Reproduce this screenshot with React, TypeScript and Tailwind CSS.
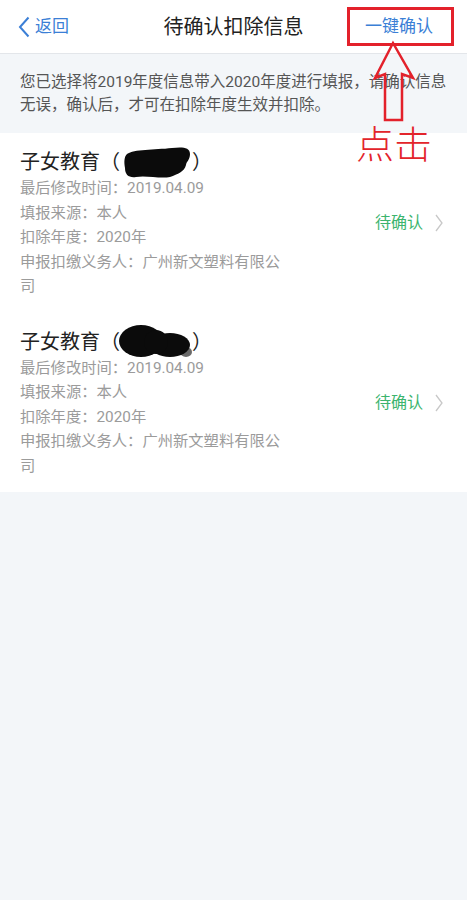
import React from "react";

const font = { fontFamily: 'Roboto, "Noto Sans CJK SC", sans-serif' };

type Deduction = {
  id: number;
  time: string;
  source: string;
  year: string;
  payer: string;
};

const items: Deduction[] = [
  { id: 1, time: "2019.04.09", source: "本人", year: "2020年", payer: "广州新文塑料有限公司" },
  { id: 2, time: "2019.04.09", source: "本人", year: "2020年", payer: "广州新文塑料有限公司" },
];

const BlobOne = () => (
  <svg className="absolute left-0 top-0 overflow-visible" width="72" height="28" viewBox="0 0 72 28">
    <path
      d="M7 6 C 14 1, 34 2, 52 0 C 62 -1, 70 -1, 70 6 C 70 12, 66 14, 66 17 C 64 24, 58 26, 50 29 C 40 31, 26 27, 16 29 C 9 30, 5 27, 5 20 C 4 14, 4 9, 7 6 Z"
      fill="#0b0b0b"
    />
  </svg>
);

const BlobTwo = () => (
  <svg className="absolute left-0 top-0 overflow-visible" width="72" height="28" viewBox="0 0 72 28">
    <ellipse cx="66" cy="24" rx="6" ry="5" fill="#6a6a6a" />
    <ellipse cx="21" cy="13" rx="22" ry="16" fill="#0b0b0b" />
    <ellipse cx="50" cy="17" rx="20" ry="12" fill="#0b0b0b" />
    <ellipse cx="36" cy="14" rx="12" ry="12" fill="#0b0b0b" />
  </svg>
);

const Card = ({ item }: { item: Deduction }) => {
  return (
    <div className="flex items-center pl-5 pr-[24px] pt-[15px] pb-[14px]">
      <div className="w-[268px]">
        <div className="text-[20px] leading-[28px] text-[#222]">
          子女教育（
          <span className="relative inline-block h-[28px] w-[72px] align-top">
            {item.id === 1 ? <BlobOne /> : <BlobTwo />}
          </span>
          ）
        </div>
        <div className="text-[15.3px] leading-[24.5px] text-[#9b9b9b]">
          <p>最后修改时间：{item.time}</p>
          <p>填报来源：{item.source}</p>
          <p>扣除年度：{item.year}</p>
          <p>申报扣缴义务人：{item.payer}</p>
        </div>
      </div>
      <div className="ml-auto flex items-center gap-[12px]">
        <span className="text-[16px] text-[#3cb46e]">待确认</span>
        <svg width="8" height="18" viewBox="0 0 8 18">
          <polyline points="1,1 7,9 1,17" fill="none" stroke="#c8c8c8" strokeWidth="1.3" />
        </svg>
      </div>
    </div>
  );
};

export default function App() {
  return (
    <div className="relative min-h-[900px] w-[467px] bg-[#f3f6f9]" style={font}>
      {/* header */}
      <div className="grid h-[54px] grid-cols-[1fr_auto_1fr] items-center border-b border-[#e3e6ea] bg-white">
        <div className="flex items-center pl-[18px] text-[#3b7fd6]">
          <svg width="12" height="22" viewBox="0 0 12 22">
            <polyline points="10.5,1.5 2,11 10.5,20.5" fill="none" stroke="#3b7fd6" strokeWidth="2" />
          </svg>
          <span className="ml-[5px] text-[17px]">返回</span>
        </div>
        <div className="text-[20px] text-[#222]">待确认扣除信息</div>
        <div className="pr-[34px] text-right text-[17px] text-[#3b7fd6]">一键确认</div>
      </div>

      {/* notice */}
      <div className="px-5 pt-[17px] pb-[16px] text-[15.5px] leading-[23px] text-[#555]">
        您已选择将2019年度信息带入2020年度进行填报，请确认信息
        <br />
        无误，确认后，才可在扣除年度生效并扣除。
      </div>

      {/* list */}
      <div className="bg-white">
        {items.map((item) => (
          <Card key={item.id} item={item} />
        ))}
      </div>

      {/* red annotations */}
      <svg
        className="pointer-events-none absolute left-0 top-0"
        width="467"
        height="130"
        viewBox="0 0 467 130"
      >
        <rect x="348.5" y="8.5" width="104" height="36" fill="none" stroke="#e3212b" strokeWidth="3" />
        <polygon
          points="393,43 413,78 402,74 402,120 385,120 385,74 375,78"
          fill="none"
          stroke="#e3212b"
          strokeWidth="2.5"
          strokeLinejoin="miter"
        />
      </svg>
      <div className="pointer-events-none absolute left-[356px] top-[126px] text-[38px] leading-none font-light text-[#e3242b]">
        点击
      </div>
    </div>
  );
}
